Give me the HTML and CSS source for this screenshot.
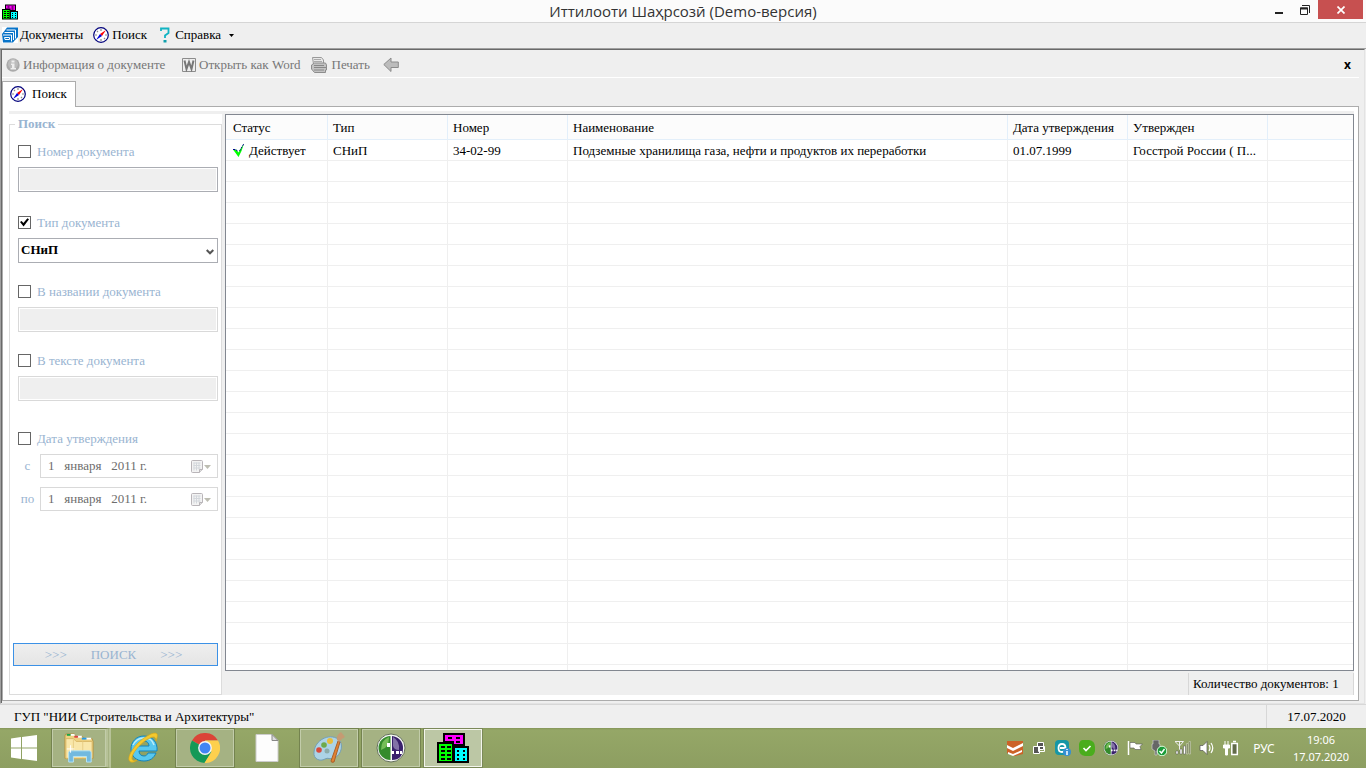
FILE: index.html
```html
<!DOCTYPE html>
<html lang="ru">
<head>
<meta charset="utf-8">
<title>Иттилооти Шаҳрсозӣ (Demo-версия)</title>
<link rel="stylesheet" href="styles.css">
</head>
<body>
<svg class="symbols" aria-hidden="true">
  <symbol id="city" viewBox="0 0 32 30">
    <path d="M6 0h22v13h4v17H0V9h6z" fill="#000"/>
    <path d="M8 2h18v9h-9V8H8z" fill="#f0f"/>
    <path d="M2 11h13v17H2z" fill="#0f0"/>
    <path d="M18 15h12v13H18z" fill="#0ff"/>
    <path d="M11 4h4v2h-4zM19 4h4v2h-4zM19 8h4v2h-4zM4 13h4v2H4zM10 13h4v2h-4zM4 17h4v2H4zM10 17h4v2h-4zM4 21h4v2H4zM10 21h4v2h-4zM4 25h4v2H4zM10 25h4v2h-4zM20 17h2v2h-2zM26 17h2v2h-2zM20 21h2v2h-2zM26 21h2v2h-2zM20 25h2v2h-2zM26 25h2v2h-2z" fill="#000"/>
  </symbol>
  <symbol id="compass" viewBox="0 0 16 16">
    <circle cx="8" cy="8" r="7.300" fill="#fff" stroke="#00007b" stroke-width="1.200"/>
    <path d="M8 2v2M8 12v2M2 8h2M12 8h2M4 4l1 1M11 11l1 1" stroke="#888" stroke-width="1.200"/>
    <path d="M13 3L9 9 7 7z" fill="#f00"/>
    <path d="M3 13L9 9 7 7z" fill="#00d"/>
  </symbol>
  <symbol id="calendar" viewBox="0 0 20 13">
    <path d="M.5 1.500q0-1 1-1h9q1 0 1 1v8l-3 3h-7q-1 0-1-1z" fill="#f3f3f3" stroke="#b9b5b9"/>
    <path d="M2.500 3h7M2.500 5.500h7M2.500 8h7M3 2.500v8M5.500 2.500v8M8 2.500v7" stroke="#d3d7dc"/>
    <path d="M8.500 12.500v-3h3" fill="#ddd" stroke="#b9b5b9"/>
    <path d="M13 5h7l-3.500 4z" fill="#bdbdb2"/>
  </symbol>
  <symbol id="orb" viewBox="0 0 30 30">
    <circle cx="15" cy="15" r="14" fill="#f4f6f4" stroke="#64705a"/>
    <path d="M14.500 3A12 12 0 0 0 14.500 27z" fill="#348b2c"/>
    <path d="M13 4Q5 7 5 17 13 15 13 4" fill="#76bd58"/>
    <path d="M16 3A12 12 0 0 1 27 15q0 12-11 12z" fill="#39216c"/>
    <path d="M17 4q7 4 6 13-5 0-6-4z" fill="#8272a7"/>
    <path d="M11 10h3v4h-3zM15 18h3v3h-3zM20 18h3v3h-3zM24 18h2v3h-2z" fill="#fff"/>
  </symbol>
</svg>

<header class="titlebar">
  <svg class="i16"><use href="#city"/></svg>
  <h1 class="title">Иттилооти Шаҳрсозӣ (Demo-версия)</h1>
  <div class="window-buttons">
    <button class="win" aria-label="Свернуть"><svg width="12" height="14" viewBox="0 0 12 14"><path d="M2 9h8v2H2z" fill="#222"/></svg></button>
    <button class="win" aria-label="Восстановить"><svg width="12" height="12" viewBox="0 0 12 12"><path d="M3 1.500h7.500V9" fill="none" stroke="#222"/><path d="M1.500 4h7v6.500h-7z" fill="none" stroke="#222"/><path d="M1 4.500h8" stroke="#222" stroke-width="2"/></svg></button>
    <button class="win win-close" aria-label="Закрыть"><svg width="8" height="8" viewBox="0 0 8 8"><path d="M.5.500l7 7m0-7l-7 7" stroke="#fff" stroke-width="1.700"/></svg></button>
  </div>
</header>

<nav class="menubar">
  <button class="menu-item menu-docs"><svg class="i16" viewBox="0 0 16 16"><path d="M0 0h16v16H0z" fill="#fff"/><path d="M5 .5h11V10l-3 3-2 2.500H1L0 7l2-2.500 1.500-2z" fill="#0873c8"/><path d="M4.500 3h9v8.500M2.500 5.500h9V13" fill="none" stroke="#fff"/><path d="M1 8h8.500v6.500" fill="none" stroke="#fff"/><path d="M2.500 10.500h5v2H3z" fill="none" stroke="#fff"/></svg>Документы</button>
  <button class="menu-item"><svg class="i16"><use href="#compass"/></svg>Поиск</button>
  <button class="menu-item menu-help"><svg width="10" height="16" viewBox="0 0 10 16"><path d="M1 4V1.500h7.500V6L5 8.500V11" fill="none" stroke="#11b3c2" stroke-width="1.800"/><path d="M3.500 13h3v2.500h-3z" fill="#11a0ad"/></svg>Справка<svg class="caret" width="5" height="3" viewBox="0 0 5 3"><path d="M0 0h5L2.500 3z"/></svg></button>
</nav>

<main class="workspace">
  <div class="toolbar">
    <button class="tool tool-info" disabled><svg class="i14" viewBox="0 0 14 14"><circle cx="7" cy="7" r="6.700" fill="#aaa"/><circle cx="7" cy="6" r="5" fill="#bcbcbc"/><path d="M5.500 2.500h3v2h-3zM5 5.500h3.500V10H10v1.500H4.500V10H6V7H5z" fill="#eee"/></svg>Информация о документе</button>
    <button class="tool" disabled><svg class="i14" viewBox="0 0 14 14"><path d="M.5.500h13v13H.5z" fill="#eee" stroke="#8c8c8c"/><path d="M2.500 2.500l2 8.500L7 4l2.500 7 2-8.500" fill="none" stroke="#777" stroke-width="2"/></svg>Открыть как Word</button>
    <button class="tool tool-print" disabled><svg class="i16" viewBox="0 0 16 16"><path d="M2.500 7L1.500.5h9L12.500 3v3" fill="#e9e9e9" stroke="#999"/><path d="M3 2.500h7M3 4.500h8" stroke="#aaa"/><path d="M.5 8l3-2h11l1 2v5h-1v2.500h-11L.5 12z" fill="#c3c3c3" stroke="#8d8d8d"/><path d="M3 8.500h10M3 10.500h12M3 13h10" stroke="#888"/></svg>Печать</button>
    <button class="tool" disabled aria-label="Назад"><svg class="i16" viewBox="0 0 16 16"><path d="M.8 7.500L8 1v4h7.300v5.500H8v4z" fill="#bcbcbc" stroke="#8b8b8b"/></svg></button>
    <button class="tool-close" aria-label="Закрыть вкладку">x</button>
  </div>
  <div class="tabs" role="tablist">
    <button class="tab" role="tab" aria-selected="true"><svg class="i16"><use href="#compass"/></svg>Поиск</button>
  </div>

  <div class="page">
    <form class="sidebar">
      <fieldset class="filters">
        <legend class="legend">Поиск</legend>
        <div class="field field-number">
          <label class="check"><input type="checkbox" class="box">Номер документа</label>
          <input class="text text-number" type="text" aria-label="Номер документа" disabled>
        </div>
        <div class="field">
          <label class="check"><input type="checkbox" class="box" checked>Тип документа</label>
          <div class="select-wrap">
            <select class="select" aria-label="Тип документа"><option>СНиП</option></select>
            <svg class="chevron" width="8" height="6" viewBox="0 0 8 6"><path d="M.7 1L4 4.300 7.300 1" fill="none" stroke="#555" stroke-width="2"/></svg>
          </div>
        </div>
        <div class="field">
          <label class="check"><input type="checkbox" class="box">В названии документа</label>
          <input class="text" type="text" aria-label="В названии документа" disabled>
        </div>
        <div class="field field-text">
          <label class="check"><input type="checkbox" class="box">В тексте документа</label>
          <input class="text" type="text" aria-label="В тексте документа" disabled>
        </div>
        <div class="field">
          <label class="check"><input type="checkbox" class="box">Дата утверждения</label>
          <div class="dates">
            <div class="date-row"><label class="date-label" for="from">с</label><div class="date"><input class="date-input" id="from" type="text" value="1 &nbsp; января &nbsp; 2011 г." disabled><button class="date-button" type="button" disabled aria-label="Выбрать дату"><svg width="20" height="13"><use href="#calendar"/></svg></button></div></div>
            <div class="date-row"><label class="date-label" for="to">по</label><div class="date"><input class="date-input" id="to" type="text" value="1 &nbsp; января &nbsp; 2011 г." disabled><button class="date-button" type="button" disabled aria-label="Выбрать дату"><svg width="20" height="13"><use href="#calendar"/></svg></button></div></div>
          </div>
        </div>
        <button class="search" type="button"><span>&gt;&gt;&gt;</span><span>ПОИСК</span><span>&gt;&gt;&gt;</span></button>
      </fieldset>
    </form>

    <section class="results">
      <div class="grid">
        <table class="table">
          <colgroup><col class="c-status"><col class="c-mid"><col class="c-mid"><col class="c-name"><col class="c-mid"><col class="c-by"><col></colgroup>
          <thead><tr><th>Статус</th><th>Тип</th><th>Номер</th><th>Наименование</th><th>Дата утверждения</th><th>Утвержден</th><th></th></tr></thead>
          <tbody id="rows">
            <tr><td><span class="status"><svg width="13" height="15" viewBox="0 0 13 15"><path d="M1 6.500h3l2.500 3L12 .5 9.500 8l-3 6z" fill="#0f0"/><path d="M1 6.500h3l2 2.500M7.500 8L12 .5" fill="none" stroke="#000090" stroke-dasharray="2 1"/></svg>Действует</span></td><td>СНиП</td><td>34-02-99</td><td>Подземные хранилища газа, нефти и продуктов их переработки</td><td>01.07.1999</td><td>Госстрой России ( П...</td><td></td></tr>
          </tbody>
        </table>
      </div>
      <div class="count-bar"><output class="count">Количество документов: 1</output></div>
    </section>
  </div>
</main>

<footer class="statusbar"><span class="org">ГУП "НИИ Строительства и Архитектуры"</span><span class="today">17.07.2020</span></footer>

<div class="taskbar">
  <button class="start" aria-label="Пуск"><svg width="28" height="26" viewBox="0 0 28 26"><path d="M1 3.500l10-1.500v10.500H1zM12 2l15-2v12.500H12zM1 13.500h10V24L1 22.500zM12 13.500h15V26l-15-2z" fill="#fff"/></svg></button>
  <div class="apps">
    <button class="app open stacked" aria-label="Проводник"><svg width="32" height="30" viewBox="0 0 34 32"><path d="M2 3l1-2h9l1 3h8l1 2h9l1 3v18H2z" fill="#eed181" stroke="#b49345"/><path d="M8 1h4l1 2H8zM15 3h5v2h-5zM24 5h6v2h-6z" fill="#fff"/><path d="M4 1h4v2H4z" fill="#1ba548"/><path d="M12 3h4v2h-4z" fill="#d44"/><path d="M20 5h5v2h-5z" fill="#269be8"/><path d="M3 6h8l3 3h17v18H3z" fill="#f9e7aa" stroke="#d9b865"/><path d="M11 7v19M21 9v17" stroke="#e8cd84"/><path d="M6 31V21q0-2 2-2h20q2 0 2 2v10h-5v-6H11v6z" fill="#72b9df" stroke="#b8e4f5"/><path d="M8 13v8M4 17h8" stroke="#fff"/></svg></button>
    <button class="app" aria-label="Internet Explorer"><svg width="32" height="32" viewBox="0 0 32 32"><path d="M17 4C9 4 4 10 4 17s5 12 13 12c6 0 10-3 12-8h-8c-1 2-2 3-4 3-3 0-5-2-5-5h18C31 10 25 4 17 4zm-5 10c0-3 2-5 5-5s5 2 5 5z" fill="#58c8ef" stroke="#1384bd"/><path d="M6 13q4-8 12-7 7 0 9 7" fill="none" stroke="#b9edfa" stroke-width="1.500"/><path d="M4 30C-3 28 8 9 24 2c8-3 7 2 5 7 0-4-2-5-6-3C14 10 4 22 5 27q1 3 5 1-3 3-6 2z" fill="#f4c92e" stroke="#d7a719" stroke-width=".7"/></svg></button>
    <button class="app open" aria-label="Chrome"><svg width="30" height="30" viewBox="0 0 30 30"><path d="M15 15L2 7.500A15 15 0 0 1 28 7.500H15z" fill="#db4437"/><path d="M15 15l6.500 3.700L14.500 30A15 15 0 0 1 2 7.500z" fill="#159957"/><path d="M15 7.500h13A15 15 0 0 1 14.500 30l7-11.300z" fill="#fdd04d"/><circle cx="15" cy="15" r="6.900" fill="#f5f5f5"/><circle cx="15" cy="15" r="5.500" fill="#4285f4"/></svg></button>
    <button class="app" aria-label="Документ"><svg width="24" height="28" viewBox="0 0 24 28"><path d="M1 .5h16l6 6v21H1z" fill="#fdfdfd" stroke="#ccc"/><path d="M17 .5v6h6z" fill="#ddd" stroke="#888"/></svg></button>
    <button class="app open" aria-label="Paint"><svg width="34" height="32" viewBox="0 0 34 32"><path d="M2 20C3 8 17 1 26 7c6 4 4 16-4 19-4 2-6-1-9 1-5 3-12 0-11-7z" fill="#acd3e6" stroke="#739fb7"/><circle cx="7" cy="18" r="2.800" fill="#d84a3c"/><circle cx="12" cy="13" r="2.800" fill="#6eaa4a"/><circle cx="18" cy="9" r="3" fill="#e8be3d"/><circle cx="15" cy="19" r="2.500" fill="#8cacaa"/><path d="M26 9l2 1-6 20q-3 1-3-1z" fill="#e28333" stroke="#a9602a"/><path d="M25 8q-1-5 4-8l4 5q-4 2-6 5z" fill="#c59b73"/></svg></button>
    <button class="app open" aria-label="MegaFon"><svg width="30" height="30"><use href="#orb"/></svg></button>
    <button class="app open current" aria-label="Иттилооти Шаҳрсозӣ"><svg width="32" height="30"><use href="#city"/></svg></button>
  </div>
  <div class="tray">
    <svg class="i16" viewBox="0 0 16 16"><path d="M0 1h16v13l-8 2-8-3z" fill="#cc6227"/><path d="M0 5l6 3 10-5v3L6 11 0 8zM1 12l5 2 9-4v2l-9 4-5-2z" fill="#fff"/></svg>
    <svg class="i16" viewBox="0 0 16 16"><path d="M6.500 2.500h6v7h-6z" fill="#555" stroke="#fff"/><path d="M2.500 6.500h6v7h-6z" fill="#555" stroke="#fff"/><path d="M7.500 6.500h6v5h-6z" fill="none" stroke="#fff"/></svg>
    <svg class="i16" viewBox="0 0 16 16"><rect width="14" height="15" rx="4" fill="#1597a6"/><path d="M10.500 10q-1 2-3.500 2-3.500 0-3.500-4T7 4q3.500 0 3.500 4H5" fill="none" stroke="#fff" stroke-width="1.800"/><circle cx="12" cy="12" r="4" fill="#358fd4"/><path d="M12 9v1M12 11v4" stroke="#fff" stroke-width="1.500"/></svg>
    <svg class="i16" viewBox="0 0 16 16"><path d="M4 0h6q6 1 6 7v4q-1 5-5 5H6q-6-1-6-7V4q1-4 4-4" fill="#4aad1d"/><path d="M4.500 8L7 10.500l4.500-4.500" fill="none" stroke="#fff" stroke-width="1.700"/></svg>
    <svg class="i16"><use href="#orb"/></svg>
    <svg class="i16" viewBox="0 0 16 16"><path d="M1.500 15V1.500M3 2.500h5l1 1.500h6.500L13 6.500l1 3H8L7 8H3z" fill="#fff" stroke="#555" stroke-width=".6"/><path d="M1.500 15V1" stroke="#fff" stroke-width="1.500"/></svg>
    <svg class="i16" viewBox="0 0 16 16"><path d="M2 4V0h6v4h1v5L6 11v4H4v-4L1 9V4z" fill="#666" stroke="#ccc" stroke-width=".7"/><circle cx="11" cy="11" r="4.800" fill="#1b9b38" stroke="#dfd"/><path d="M8.500 11l2 2 3-4" fill="none" stroke="#fff" stroke-width="1.500"/></svg>
    <svg class="i16" viewBox="0 0 16 16"><path d="M0 1.500h8.500L4.500 6zM4.500 1v9" fill="none" stroke="#eee"/><path d="M1 11h2v3H1zM5 9h2v5H5zM8.500 6h2v8h-2z" fill="#fff" stroke="#555" stroke-width=".5"/><path d="M11.500 3.500h1.500V14h-1.500zM14 1.500h1.500V14H14z" fill="#6d7750" stroke="#d0d5bf" stroke-width=".6"/></svg>
    <svg class="i16" viewBox="0 0 16 16"><path d="M1 5.500h3l4-4v13l-4-4H1z" fill="#fff" stroke="#555" stroke-width=".7"/><path d="M10 5q2 3 0 6M12 3q3.500 5 0 10" fill="none" stroke="#fff" stroke-width="1.200"/></svg>
    <svg class="i16" viewBox="0 0 16 16"><path d="M2 1v4M5 1v4M.5 5h6v3H4.500v7h-2V8h-2z" fill="#fff" stroke="#fff"/><path d="M8.800 3.500h5.500v11H8.800zM10 1.500h3" fill="#626b49" stroke="#fff" stroke-width="1.500"/></svg>
  </div>
  <button class="lang">РУС</button>
  <div class="clock"><time>19:06</time><time>17.07.2020</time></div>
</div>
<script src="rows.js"></script>
</body>
</html>
```

FILE: styles.css
```css
* { box-sizing: border-box; }
body {
  margin: 0;
  height: 100vh;
  display: flex;
  flex-direction: column;
  overflow: hidden;
  background: #efefef;
  color: #000;
  font: 13px/16px "Liberation Serif", serif;
}
button, input, select { font: inherit; color: inherit; }
button { background: none; border: 0; padding: 0; margin: 0; }
svg { display: block; flex: none; }
.symbols { position: absolute; width: 0; height: 0; }
.i16 { width: 16px; height: 16px; }
.i14 { width: 14px; height: 14px; }

.titlebar {
  display: grid;
  grid-template-columns: 104px 1fr 104px;
  height: 23px;
  flex: none;
  background: #fbfbfb;
  border-bottom: 1px solid #d5d5d5;
}
.titlebar > .i16 { margin: 4px 2px; }
.title {
  margin: 0;
  text-align: center;
  font: 15px/23px "Open Sans", "Noto Sans", sans-serif;
  color: #333;
}
.window-buttons { display: flex; justify-content: flex-end; padding-right: 3px; height: 19px; }
.win { width: 26px; display: flex; align-items: center; justify-content: center; }
.win-close { width: 45px; background: #c75050; }

.menubar {
  display: flex;
  align-items: center;
  gap: 9px;
  flex: none;
  height: 26px;
  padding: 0 0 1px 2px;
  border-bottom: 1px solid #a0a0a0;
}
.menu-item, .tool { display: flex; align-items: center; gap: 3px; }
.menu-docs { gap: 2px; padding-right: 1px; }
.menu-help { gap: 5px; padding-left: 4px; }
.caret { margin-left: 3px; }

.workspace {
  flex: 1;
  min-height: 0;
  display: flex;
  flex-direction: column;
  padding: 0 5px 0 1px;
  margin-right: 1px;
  border: 1px solid #e3e3e3;
  border-top-color: #696969;
  border-left-color: #a0a0a0;
  box-shadow: inset 1px 0 #696969;
}
.toolbar {
  display: flex;
  align-items: center;
  gap: 10px;
  flex: none;
  height: 28px;
  padding: 2px 8px 0 4px;
  border-bottom: 1px solid #fff;
  color: #777;
}
.tool-info { min-width: 166px; }
.tool-print { gap: 5px; min-width: 62px; }
.tool-close { margin-left: auto; font: bold 12px/16px "Noto Sans", sans-serif; color: #000; }
.tabs { flex: none; height: 28px; padding-top: 3px; }
.tab {
  display: flex;
  align-items: center;
  gap: 6px;
  height: 26px;
  padding: 0 8px 2px 7px;
  background: #fff;
  border: 1px solid #acacac;
  border-bottom: 0;
  position: relative;
}
.page {
  flex: 1;
  min-height: 0;
  display: flex;
  margin-bottom: 2px;
  padding: 4px 4px 5px 6px;
  background: #fff;
  border: 1px solid #acacac;
}

.sidebar { display: flex; flex: none; width: 213px; padding-top: 2px; border-top: 3px solid #efefef; }
.filters {
  flex: 1;
  display: flex;
  flex-direction: column;
  min-width: 0;
  margin: 0;
  padding: 11px 3px 28px;
  border: 1px solid #dcdcdc;
  color: #99b4d1;
}
.legend { padding: 0 3px; margin-left: 2px; font-weight: bold; line-height: 16px; }
.field { display: flex; flex-direction: column; gap: 7px; margin: 0 0 20px 5px; }
.field-number { margin-bottom: 22px; }
.field-text { margin-bottom: 29px; }
.check { display: flex; align-items: center; gap: 6px; height: 17px; }
.box {
  appearance: none;
  display: grid;
  place-items: center;
  width: 13px;
  height: 13px;
  margin: 0;
  background: #fff;
  border: 1px solid #666;
}
.box:checked::before {
  content: "";
  width: 9px;
  height: 9px;
  background: #000;
  clip-path: polygon(0 45%, 18% 32%, 38% 55%, 82% 2%, 100% 15%, 40% 95%);
}
.text {
  width: 100%;
  height: 25px;
  padding: 1px;
  border: 1px solid #d9d9d9;
  background: #efefef content-box;
}
.text-number { border-color: #abadb3; }
.select-wrap { position: relative; }
.select {
  appearance: none;
  display: block;
  width: 100%;
  height: 25px;
  padding: 0 20px 1px 2px;
  background: #fff;
  border: 1px solid #abadb3;
  border-radius: 0;
  font-weight: bold;
  color: #000;
}
.chevron { position: absolute; right: 4px; top: 11px; pointer-events: none; }
.dates { display: flex; flex-direction: column; gap: 9px; }
.date-row { display: flex; align-items: center; }
.date-label { flex: none; width: 22px; text-align: center; padding-right: 3px; }
.date {
  flex: 1;
  min-width: 0;
  display: flex;
  align-items: center;
  height: 24px;
  padding: 0 6px 0 7px;
  border: 1px solid #d9d9d9;
}
.date-input { flex: 1; min-width: 0; padding: 0; border: 0; background: none; color: #6d6d6d; }
.search {
  display: flex;
  justify-content: center;
  align-items: center;
  gap: 24px;
  height: 23px;
  margin-top: auto;
  padding-right: 4px;
  background: linear-gradient(#efefef, #e5e5e5);
  border: 1px solid #3c91e6;
}

.results { flex: 1; min-width: 0; display: flex; flex-direction: column; background: #efefef; padding: 3px 0 0 3px; }
.grid { flex: 1; min-height: 0; overflow: hidden; background: #fff; border: 1px solid #828790; }
.table { width: 100%; table-layout: fixed; border-collapse: separate; border-spacing: 0; }
.c-status { width: 102px; }
.c-mid { width: 120px; }
.c-name { width: 440px; }
.c-by { width: 140px; }
.table th, .table td { padding: 1px 0 0 5px; text-align: left; font-weight: normal; white-space: nowrap; overflow: hidden; }
.table th { height: 25px; background: #fcfcfc; border-right: 1px solid #e3effa; border-bottom: 1px solid #e3effa; }
.table td { height: 21px; border-right: 1px solid #efefef; border-bottom: 1px solid #efefef; }
.table th:first-child { padding-left: 7px; }
.table td:first-child { padding-left: 6px; }
.table th:last-child, .table td:last-child { border-right: 0; }
.status { display: flex; align-items: center; gap: 4px; }
.count-bar { flex: none; height: 24px; padding-top: 2px; display: flex; justify-content: flex-end; }
.count { min-width: 166px; padding: 3px 10px 0 4px; border-left: 1px solid #d7d7d7; border-right: 1px solid #d7d7d7; }

.statusbar {
  display: flex;
  flex: none;
  height: 24px;
  line-height: 24px;
  border-top: 1px solid #d7d7d7;
}
.org { flex: 1; padding-left: 14px; }
.today { width: 100px; text-align: center; border-left: 1px solid #d7d7d7; }

.taskbar {
  display: flex;
  align-items: center;
  flex: none;
  height: 40px;
  background: linear-gradient(#849559, #95a767 2px, #8d9e61);
  color: #fff;
  font: 12px/17px "Noto Sans", sans-serif;
}
.start { width: 51px; padding-left: 10px; }
.apps { display: flex; gap: 2px; }
.app {
  display: flex;
  align-items: center;
  justify-content: center;
  width: 60px;
  height: 40px;
  border: 1px solid transparent;
}
.open { background: #a5b283; border-color: #74834f; box-shadow: inset 0 0 0 1px #c2ccaa; }
.stacked { border-right: 5px double #b7c298; }
.current { background: #bcc7a5; border-color: #7b8959; box-shadow: inset 0 0 0 1px #f3f5ec; }
.tray { display: flex; gap: 8px; margin-left: auto; }
.lang { width: 50px; text-align: center; }
.clock { width: 64px; margin-right: 13px; display: flex; flex-direction: column; align-items: center; font-size: 11px; }
```

FILE: rows.js
```js
// Empty ruled lines below the results keep the grid drawn to its bottom edge.
const rows = document.getElementById("rows");
for (let i = 0; i < 60; i++) {
  const row = rows.insertRow();
  for (let c = 0; c < 7; c++) row.insertCell();
}
```
